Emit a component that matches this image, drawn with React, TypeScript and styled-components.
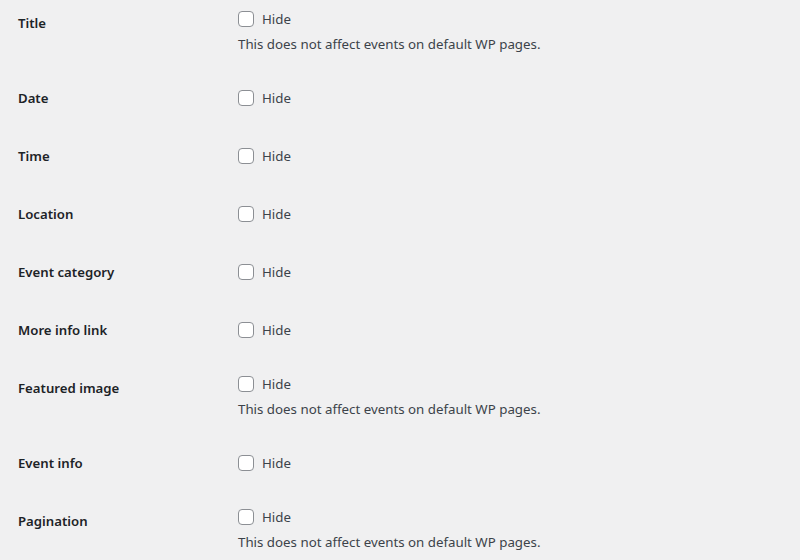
import React from 'react';
import styled, { createGlobalStyle } from 'styled-components';

const Global = createGlobalStyle`
  html, body {
    margin: 0;
    padding: 0;
    background: #f0f0f1;
  }
  body {
    font-family: "Segoe UI", "Noto Sans", sans-serif;
    font-size: 13.3px;
    color: #1d2327;
    overflow: hidden;
  }
`;

const S = {
  Page: styled.div`
    padding: 0 18px;
    margin-top: -6px;
  `,

  Table: styled.div`
    display: flex;
    flex-direction: column;
  `,

  Row: styled.div`
    display: flex;
    align-items: flex-start;
  `,

  Th: styled.div`
    width: 200px;
    padding: 20px 10px 0 0;
    font-size: 13.2px;
    font-weight: 600;
    line-height: 18px;
    color: #1d2327;
    flex-shrink: 0;
  `,

  Td: styled.div`
    padding: 15px 10px;
    display: flex;
    flex-direction: column;
  `,

  Label: styled.label<{ $tall: boolean }>`
    display: flex;
    align-items: center;
    gap: 8px;
    height: ${(p) => (p.$tall ? 28.2 : 20)}px;
    color: #3c434a;
    cursor: pointer;
  `,

  Box: styled.span`
    width: 16px;
    height: 16px;
    box-sizing: border-box;
    border: 1px solid #8c8f94;
    border-radius: 4px;
    background: #fff;
    flex-shrink: 0;
  `,

  Description: styled.p`
    margin: 4.5px 0 0;
    line-height: 20px;
    color: #3c434a;
  `,
};

const rows = [
  { name: 'Title', note: true },
  { name: 'Date', note: false },
  { name: 'Time', note: false },
  { name: 'Location', note: false },
  { name: 'Event category', note: false },
  { name: 'More info link', note: false },
  { name: 'Featured image', note: true },
  { name: 'Event info', note: false },
  { name: 'Pagination', note: true },
];

const App: React.FC = () => {
  return (
    <>
      <Global />
      <S.Page>
        <S.Table>
          {rows.map((row) => (
            <S.Row key={row.name}>
              <S.Th>{row.name}</S.Th>
              <S.Td>
                <S.Label $tall={!row.note}>
                  <S.Box />
                  Hide
                </S.Label>
                {row.note && <S.Description>This does not affect events on default WP pages.</S.Description>}
              </S.Td>
            </S.Row>
          ))}
        </S.Table>
      </S.Page>
    </>
  );
};

export default App;
